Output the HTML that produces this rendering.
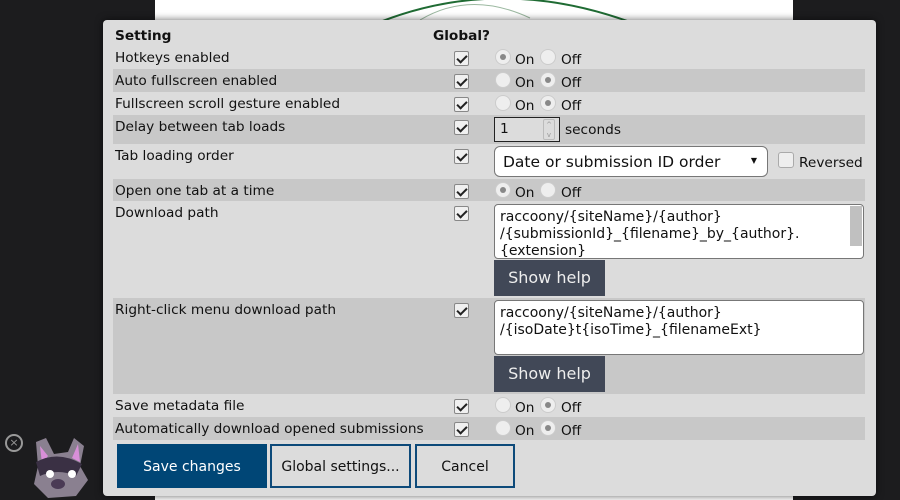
<!DOCTYPE html>
<html><head><style>
*{box-sizing:border-box;margin:0;padding:0}
body{width:900px;height:500px;background:#1c1c1e;position:relative;overflow:hidden;font-family:"DejaVu Sans","Liberation Sans",sans-serif;font-size:13.7px;color:#111}
.white{position:absolute;left:155px;top:0;width:638px;height:500px;background:#fff}
.panel{position:absolute;left:103px;top:20px;width:773px;height:476px;background:#dcdcdc;border-radius:4px;box-shadow:0 0 8px rgba(0,0,0,.6)}
.row{position:absolute;left:10px;width:752px}
.dark{background:#c8c8c8}
.lbl{position:absolute;left:2px;top:4px;white-space:nowrap}
.cb{position:absolute;left:341px;top:5px;width:15px;height:15px;border:1px solid #888;border-radius:2px;background:#f0f0f0}
.cb:after{content:"";position:absolute;left:4px;top:1px;width:4px;height:8px;border:solid #222;border-width:0 2.5px 2.5px 0;transform:rotate(45deg)}
.rad{position:absolute;top:3px;width:16px;height:16px;border-radius:50%;background:#eee;border:1px solid #ccc}
.rad.on:after{content:"";position:absolute;left:4px;top:4px;width:6px;height:6px;border-radius:50%;background:#888}
.rt{position:absolute;top:6px}
.ta{position:absolute;left:381px;width:370px;background:#fff;border:1px solid #777;border-radius:4px;padding:4px 5px;font-size:14px;line-height:17px;overflow:hidden;white-space:nowrap}
.help{position:absolute;left:381px;width:111px;height:36px;background:#414857;color:#eee;font-size:16px;line-height:36px;text-align:center}
.btn{position:absolute;top:424px;height:44px;font-size:14px;line-height:42px;text-align:center;border:2px solid #0d4a7a;background:#dcdcdc;white-space:nowrap}
</style></head><body>
<div class="white"></div>
<svg style="position:absolute;left:380px;top:0" width="260" height="20"><path d="M0 22 Q120 -25 250 22" stroke="#1f6b33" stroke-width="2" fill="none"/><path d="M40 20 Q90 -10 150 18" stroke="#9bb8a0" stroke-width="1" fill="none"/></svg>
<div class="panel">
<div class="row" style="top:6px;height:20px;font-weight:bold"><span class="lbl" style="top:2px">Setting</span><span style="position:absolute;left:320px;top:2px">Global?</span></div>

<div class="row" style="top:26px;height:23px"><span class="lbl">Hotkeys enabled</span><i class="cb"></i><i class="rad on" style="left:382px"></i><span class="rt" style="left:402px">On</span><i class="rad" style="left:427px"></i><span class="rt" style="left:448px">Off</span></div>
<div class="row dark" style="top:49px;height:23px"><span class="lbl">Auto fullscreen enabled</span><i class="cb"></i><i class="rad" style="left:382px"></i><span class="rt" style="left:402px">On</span><i class="rad on" style="left:427px"></i><span class="rt" style="left:448px">Off</span></div>
<div class="row" style="top:72px;height:23px"><span class="lbl">Fullscreen scroll gesture enabled</span><i class="cb"></i><i class="rad" style="left:382px"></i><span class="rt" style="left:402px">On</span><i class="rad on" style="left:427px"></i><span class="rt" style="left:448px">Off</span></div>
<div class="row dark" style="top:95px;height:29px"><span class="lbl">Delay between tab loads</span><i class="cb"></i>
<div style="position:absolute;left:381px;top:2px;width:66px;height:25px;border:1px solid #222;background:#dcdcdc;padding:3px 5px">1<div style="position:absolute;right:4px;top:1px;width:12px;height:21px;border:1px solid #bbb;border-radius:2px;font-size:7px;line-height:10px;text-align:center;color:#999">^<br>v</div></div>
<span style="position:absolute;left:452px;top:7px">seconds</span></div>
<div class="row" style="top:124px;height:35px"><span class="lbl">Tab loading order</span><i class="cb"></i>
<div style="position:absolute;left:381px;top:2px;width:274px;height:31px;border:1px solid #777;border-radius:6px;background:#fff;font-size:15.5px;padding:6px 8px;white-space:nowrap">Date or submission ID order<span style="position:absolute;right:10px;top:9px;font-size:8px">▼</span></div>
<i style="position:absolute;left:665px;top:8px;width:16px;height:16px;border:1px solid #aaa;border-radius:3px;background:#eee"></i><span style="position:absolute;left:686px;top:11px">Reversed</span></div>
<div class="row dark" style="top:159px;height:22px"><span class="lbl">Open one tab at a time</span><i class="cb"></i><i class="rad on" style="left:382px"></i><span class="rt" style="left:402px">On</span><i class="rad" style="left:427px"></i><span class="rt" style="left:448px">Off</span></div>
<div class="row" style="top:181px;height:97px"><span class="lbl">Download path</span><i class="cb"></i>
<div class="ta" style="top:3px;height:55px;padding-right:18px">raccoony/{siteName}/{author}<br>/{submissionId}_{filename}_by_{author}.<br>{extension}<div style="position:absolute;right:1px;top:1px;width:12px;height:40px;background:#c0c0c0"></div></div>
<div class="help" style="top:59px">Show help</div></div>
<div class="row dark" style="top:278px;height:96px"><span class="lbl">Right-click menu download path</span><i class="cb"></i>
<div class="ta" style="top:2px;height:55px">raccoony/{siteName}/{author}<br>/{isoDate}t{isoTime}_{filenameExt}</div>
<div class="help" style="top:58px">Show help</div></div>
<div class="row" style="top:374px;height:23px"><span class="lbl">Save metadata file</span><i class="cb"></i><i class="rad" style="left:382px"></i><span class="rt" style="left:402px">On</span><i class="rad on" style="left:427px"></i><span class="rt" style="left:448px">Off</span></div>
<div class="row dark" style="top:397px;height:23px"><span class="lbl">Automatically download opened submissions</span><i class="cb"></i><i class="rad" style="left:382px"></i><span class="rt" style="left:402px">On</span><i class="rad on" style="left:427px"></i><span class="rt" style="left:448px">Off</span></div>

<div class="btn" style="left:14px;width:150px;background:#004676;border-color:#004676;color:#fff">Save changes</div>
<div class="btn" style="left:164px;width:141px;margin-left:3px">Global settings...</div>
<div class="btn" style="left:312px;width:100px">Cancel</div>
</div>
<div style="position:absolute;left:5px;top:434px;width:18px;height:18px;border:2px solid #999;border-radius:50%;color:#999;font-size:11px;line-height:14px;text-align:center">×</div>
<div style="position:absolute;left:95px;top:462px;width:0;height:0;border:8px solid transparent;border-right-color:#dcdcdc"></div>
<svg style="position:absolute;left:28px;top:432px" width="70" height="68"><path d="M8 10 L18 6 L26 22 L40 20 L46 6 L56 14 L52 34 L60 48 L48 64 L20 66 L6 52 L10 34 Z" fill="#8a8090"/><path d="M12 14 L20 24 L14 32 Z M50 12 L44 26 L52 30 Z" fill="#d88fd8"/><path d="M8 30 Q30 18 54 32 L48 44 Q30 36 12 44 Z" fill="#3a3044"/><circle cx="22" cy="42" r="4" fill="#fff"/><circle cx="44" cy="42" r="4" fill="#fff"/><ellipse cx="30" cy="52" rx="7" ry="5" fill="#4a3a55"/></svg>
</body></html>
